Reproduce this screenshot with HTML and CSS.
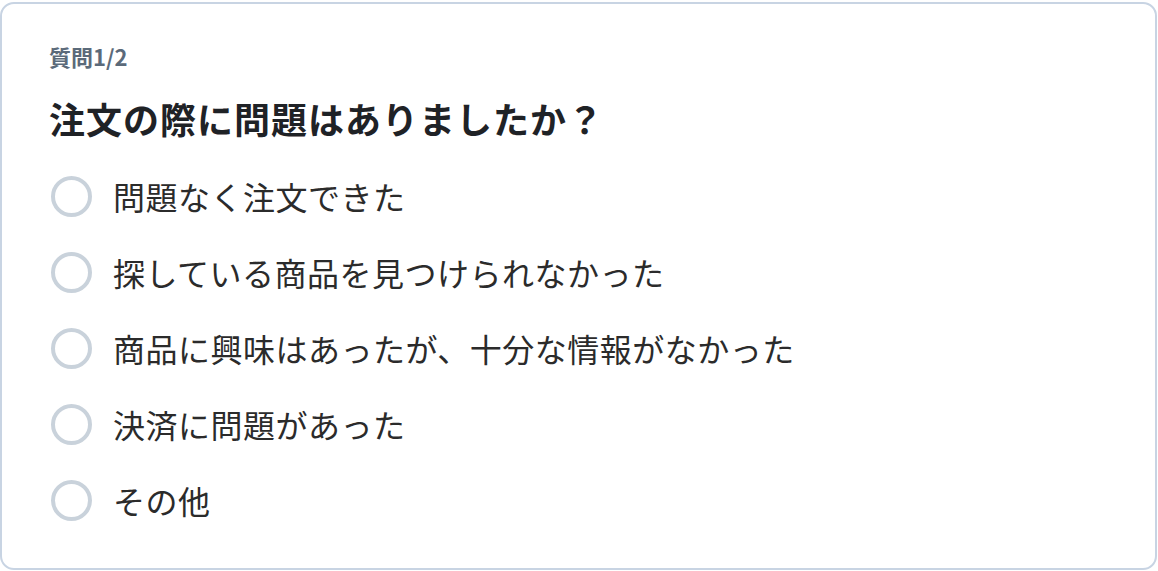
FILE: index.html
```html
<!DOCTYPE html>
<html lang="ja">
<head>
<meta charset="utf-8">
<title>質問</title>
<link rel="stylesheet" href="styles.css">
</head>
<body>
<div class="card">
  <div class="label">質問1/2</div>
  <h1 class="question">注文の際に問題はありましたか？</h1>
  <ul class="options">
    <li class="option"><span class="radio"></span><span class="text">問題なく注文できた</span></li>
    <li class="option"><span class="radio"></span><span class="text">探している商品を見つけられなかった</span></li>
    <li class="option"><span class="radio"></span><span class="text">商品に興味はあったが、十分な情報がなかった</span></li>
    <li class="option"><span class="radio"></span><span class="text">決済に問題があった</span></li>
    <li class="option"><span class="radio"></span><span class="text">その他</span></li>
  </ul>
</div>
</body>
</html>
```

FILE: styles.css
```css
html, body {
  margin: 0;
  padding: 0;
  background: #ffffff;
}
body {
  font-family: "Noto Sans CJK JP", "Noto Sans", sans-serif;
  padding-top: 2px;
}
.card {
  box-sizing: border-box;
  width: 1157px;
  height: 568px;
  border: 2px solid #c8d4e3;
  border-radius: 14px;
  padding: 36px 47px 0 47px;
  display: flex;
  flex-direction: column;
}
.label {
  font-size: 22px;
  line-height: 32px;
  font-weight: 700;
  color: #5b6a7a;
}
.question {
  margin: 22px 0 0 0;
  font-size: 36px;
  line-height: 48px;
  font-weight: 700;
  letter-spacing: 1px;
  color: #1f2226;
}
.options {
  list-style: none;
  margin: 16px 0 0 0;
  padding: 0;
  display: flex;
  flex-direction: column;
}
.option {
  height: 76px;
  display: flex;
  align-items: center;
  gap: 21px;
}
.radio {
  box-sizing: border-box;
  width: 41px;
  height: 41px;
  margin-left: 2px;
  border: 4px solid #c9d2db;
  border-radius: 50%;
  flex: none;
}
.text {
  font-size: 32px;
  line-height: 44px;
  letter-spacing: 0.5px;
  color: #2b2b2b;
}
```
